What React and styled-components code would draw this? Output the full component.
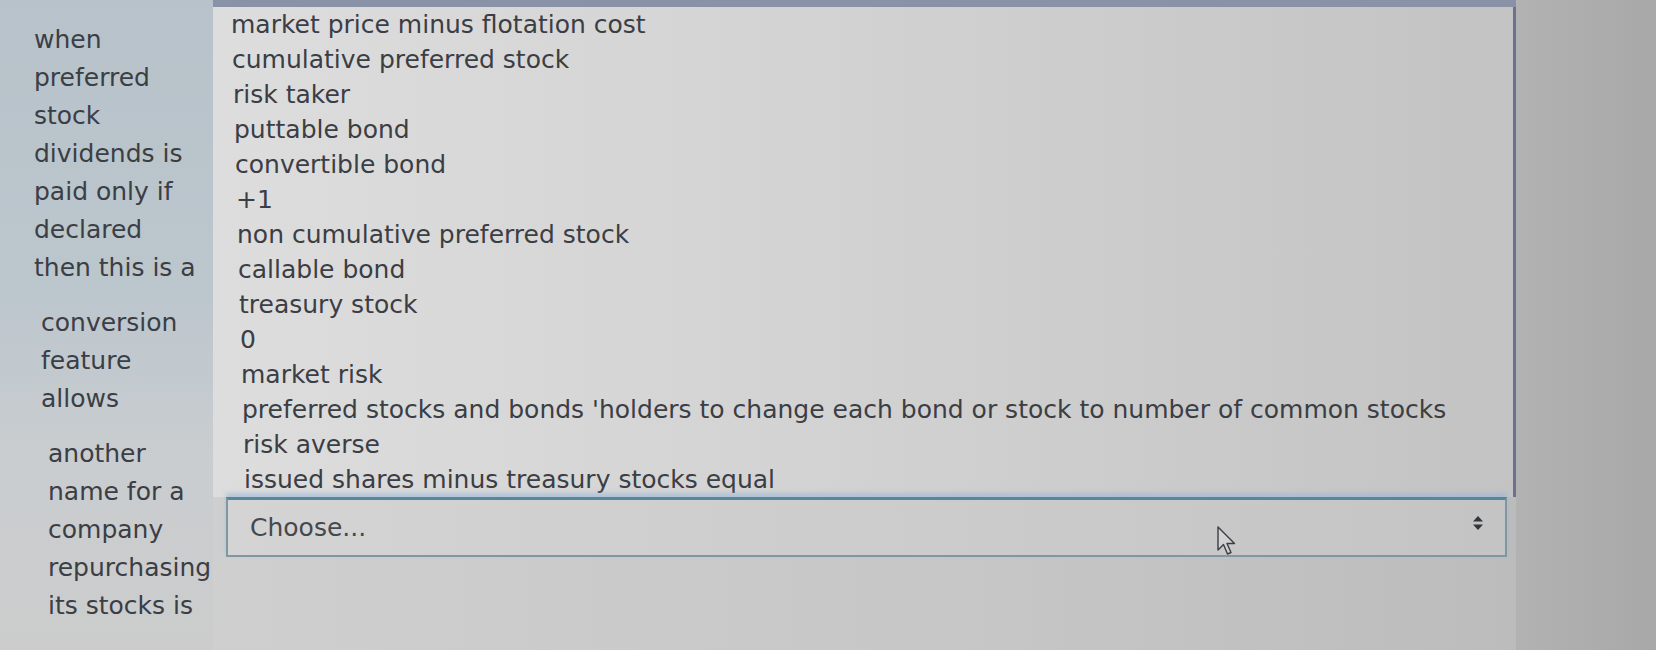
import React from 'react'
import styled, { createGlobalStyle } from 'styled-components'

const GlobalStyle = createGlobalStyle`
  html, body {
    margin: 0;
    padding: 0;
    background: #b3b3b3;
  }
  body {
    font-family: 'DejaVu Sans', 'Liberation Sans', sans-serif;
    color: #3b3e44;
  }
`

const Page = styled.div`
  display: flex;
  width: 1656px;
  height: 650px;
  overflow: hidden;
`

const QuestionCol = styled.div`
  width: 213px;
  flex-shrink: 0;
  box-sizing: border-box;
  padding: 21px 0 0 34px;
  display: flex;
  flex-direction: column;
  gap: 17px;
  background: linear-gradient(180deg, #b7c2ca 0%, #bcc6cd 45%, #c9cdd0 70%, #cccccc 100%);
`

const Question = styled.div`
  font-size: 25px;
  line-height: 38px;
  white-space: nowrap;
  padding-left: ${({ shift }) => shift || 0}px;
`

const AnswerCol = styled.div`
  width: 1303px;
  flex-shrink: 0;
  display: flex;
  flex-direction: column;
  position: relative;
  background: linear-gradient(90deg, #cfcfcf 0%, #c6c6c6 60%, #bcbcbc 100%);
`

const TopStrip = styled.div`
  height: 7px;
  background: #8a92a8;
`

const OptionList = styled.ul`
  list-style: none;
  margin: 0;
  padding: 0;
  border-right: 3px solid #6c7190;
  background: linear-gradient(90deg, #dddddd 0%, #d3d3d3 45%, #c3c3c3 100%);
`

const Option = styled.li`
  font-size: 25px;
  line-height: 35px;
  padding-left: ${({ indent }) => indent || 18}px;
  white-space: nowrap;
`

const SelectBox = styled.div`
  margin: 0 9px 0 13px;
  height: 60px;
  box-sizing: border-box;
  border: 2px solid #7d98a4;
  border-top: 3px solid #55889c;
  box-shadow: 0 -4px 4px rgba(150, 180, 215, 0.55);
  display: flex;
  align-items: center;
  justify-content: space-between;
  padding: 0 21px 0 22px;
  background: linear-gradient(90deg, #d4d4d4 0%, #cbcbcb 60%, #c4c4c4 100%);
`

const SelectText = styled.span`
  font-size: 25px;
  color: #45484d;
`

const Arrows = styled.svg`
  width: 12px;
  height: 16px;
  margin-top: -10px;
`

const Cursor = styled.svg`
  position: absolute;
  left: 1003px;
  top: 525px;
  width: 22px;
  height: 32px;
`

const Outside = styled.div`
  flex: 1;
  background: linear-gradient(90deg, #b2b2b2 0%, #a8a8a8 100%);
`

const options = [
  'market price minus flotation cost',
  'cumulative preferred stock',
  'risk taker',
  'puttable bond',
  'convertible bond',
  '+1',
  'non cumulative preferred stock',
  'callable bond',
  'treasury stock',
  '0',
  'market risk',
  "preferred stocks and bonds 'holders to change each bond or stock to number of common stocks",
  'risk averse',
  'issued shares minus treasury stocks equal',
]

const questions = [
  ['when', 'preferred', 'stock', 'dividends is', 'paid only if', 'declared', 'then this is a'],
  ['conversion', 'feature', 'allows'],
  ['another', 'name for  a', 'company', 'repurchasing', 'its stocks is'],
]

const App = () => (
  <>
    <GlobalStyle />
    <Page>
      <QuestionCol>
        {questions.map((lines, i) => (
          <Question key={i} shift={Math.round(i * 7)}>
            {lines.map((l) => (
              <div key={l}>{l}</div>
            ))}
          </Question>
        ))}
      </QuestionCol>
      <AnswerCol>
        <TopStrip />
        <OptionList>
          {options.map((o, i) => (
            <Option key={o} indent={18 + i}>
              {o}
            </Option>
          ))}
        </OptionList>
        <SelectBox>
          <SelectText>Choose...</SelectText>
          <Arrows viewBox='0 0 12 16'>
            <path d='M6 1 L11 6.5 H1 Z' fill='#33363b' />
            <path d='M6 15 L11 9.5 H1 Z' fill='#33363b' />
          </Arrows>
        </SelectBox>
        <Cursor viewBox='0 0 22 32'>
          <path
            d='M2 2 L2 25 L7.5 19.5 L11.5 29 L15 27.5 L11 18.5 L18.5 18.5 Z'
            fill='#d2d2d2'
            stroke='#3a3d42'
            strokeWidth='1.4'
            strokeLinejoin='round'
          />
        </Cursor>
      </AnswerCol>
      <Outside />
    </Page>
  </>
)

export default App
